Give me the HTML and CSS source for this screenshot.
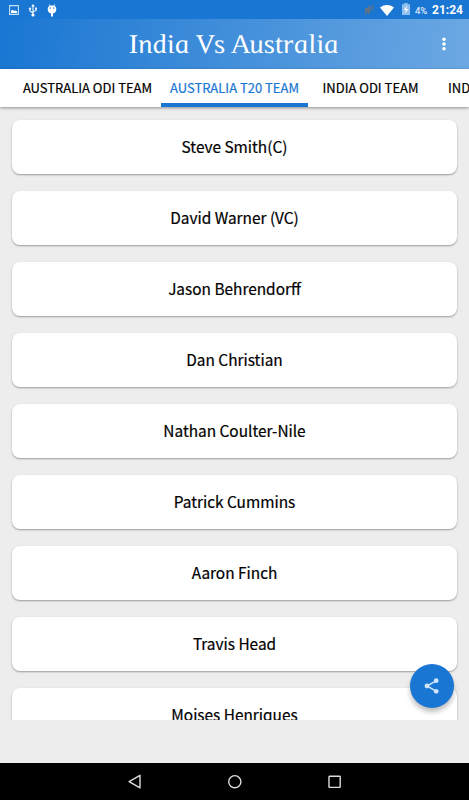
FILE: index.html
```html
<!DOCTYPE html>
<html lang="en">
<head>
<meta charset="utf-8">
<title>India Vs Australia</title>
<link rel="stylesheet" href="styles.css">
</head>
<body>
<div class="screen">
  <div class="status">
    <div class="status-left">
      <svg class="pic" width="10" height="10" viewBox="0 0 10 10"><path d="M.6.6h8.8v8.8H.6z" fill="none" stroke="#c5e0fb" stroke-width="1.1"/><path d="M2 8V5.8l1.7-1 1.500 1.300 1.200-.5L8 6.200V8z" fill="#fff"/></svg>
      <svg class="usb" width="10" height="13" viewBox="0 0 10 13"><path d="M5 2v9M5 9 2 7V4.500M5 8l3-1.500V4" fill="none" stroke="#e8f3ff" stroke-width="1.200"/><path d="m5 0 1.800 2.600H3.200z" fill="#fff"/><circle cx="5" cy="11" r="1.600" fill="#fff"/><circle cx="2" cy="4.600" r="1.200" fill="#e8f3ff"/><path d="M7 3.400h2v2H7z" fill="#e8f3ff"/></svg>
      <svg class="bug" width="10" height="13" viewBox="0 0 10 13"><path d="m2.300.5 1 1.500M7.700.5l-1 1.500" stroke="#fff"/><path d="M.7 5C.7 2.600 2.500 1.500 5 1.500S9.300 2.600 9.300 5c0 2.500-1.300 4.200-3.300 4.500V12.500H4V9.500C2 9.200.7 7.500.7 5z" fill="#fff"/><circle cx="3.300" cy="4" r=".7" fill="#1976d2"/><circle cx="6.700" cy="4" r=".7" fill="#1976d2"/></svg>
    </div>
    <div class="status-right">
      <svg class="mute" width="11" height="12" viewBox="0 0 11 12"><path d="M1 4h2l3-3v10L3 8H1z" fill="#607487"/><path d="m.8 10.500 9-9M7.500 4l2 .2M7.500 6.500l2 1" stroke="#607487" stroke-width="1.100"/></svg>
      <svg class="wifi" width="14" height="11" viewBox="0 0 14 11"><path d="M0 2.500Q7-2.300 14 2.500L7 11z" fill="#fff"/></svg>
      <svg class="batt" width="8" height="12" viewBox="0 0 8 12"><path d="M2.300 0h3.400v1.300H8V12H0V1.300h2.300z" fill="#8fbfee"/><path d="M4.900 2.500 1.800 7h2l-.6 3.400L6.300 6h-2z" fill="#fff"/></svg>
      <span class="pct">4%</span>
      <span class="clock">21:24</span>
    </div>
  </div>
  <header class="bar">
    <svg class="title" width="214" height="40" viewBox="0 0 214 40"><text x="2" y="24" textLength="210" lengthAdjust="spacingAndGlyphs" transform="translate(-4.500 0) skewX(10)">India Vs Australia</text></svg>
    <svg class="more" width="4" height="14" viewBox="0 0 4 14"><g fill="#fff"><circle cx="2" cy="2.300" r="1.800"/><circle cx="2" cy="7" r="1.800"/><circle cx="2" cy="11.700" r="1.800"/></g></svg>
  </header>
  <nav class="tabs">
    <div class="tab first">AUSTRALIA ODI TEAM</div>
    <div class="tab active">AUSTRALIA T20 TEAM</div>
    <div class="tab third">INDIA ODI TEAM</div>
    <div class="tab last">INDIA T20 TEAM</div>
  </nav>
  <main class="list">
    <div class="card">Steve Smith(C)</div>
    <div class="card">David Warner (VC)</div>
    <div class="card">Jason Behrendorff</div>
    <div class="card">Dan Christian</div>
    <div class="card">Nathan Coulter-Nile</div>
    <div class="card">Patrick Cummins</div>
    <div class="card">Aaron Finch</div>
    <div class="card">Travis Head</div>
    <div class="card">Moises Henriques</div>
  </main>
  <div class="gap"></div>
  <div class="nav">
    <svg width="14" height="16" viewBox="0 0 14 16"><path d="M12 1.300v12.600L1.100 7.600z" fill="none" stroke="#ddd" stroke-width="1.400" stroke-linejoin="round"/></svg>
    <svg width="14" height="16" viewBox="0 0 14 16"><circle cx="6.800" cy="7.700" r="6.100" fill="none" stroke="#ddd" stroke-width="1.400"/></svg>
    <svg width="14" height="16" viewBox="0 0 14 16"><rect x="1" y="2.200" width="11.200" height="11.200" rx=".6" fill="none" stroke="#ddd" stroke-width="1.400"/></svg>
  </div>
  <div class="fab"><svg width="16" height="18" viewBox="0 0 16 18"><path d="M12 3.800 3 9l9 5.200" fill="none" stroke="#cfe5fb" stroke-width="1.500"/><g fill="#cfe5fb"><circle cx="12.200" cy="3.700" r="2.400"/><circle cx="3" cy="9" r="2.400"/><circle cx="12.200" cy="14.300" r="2.400"/></g></svg></div>
</div>
</body>
</html>
```
FILE: styles.css
```css
* { box-sizing: border-box; }
body { margin: 0; }
.screen {
  position: relative;
  width: 469px;
  height: 800px;
  overflow: hidden;
  display: flex;
  flex-direction: column;
  background: #ededed;
  color: #000;
  font-family: "Noto Sans CJK JP", "Noto Sans", sans-serif;
}
.status {
  height: 19px;
  flex: none;
  display: flex;
  justify-content: space-between;
  background: #1976d2;
  color: #fff;
  font-family: Roboto, sans-serif;
}
.status-left, .status-right { display: flex; align-items: center; height: 20px; }
.pic { margin-left: 9px; }
.usb { margin-left: 9px; }
.bug { margin-left: 9px; }
.status-right { padding-right: 6px; }
.wifi { margin-left: 5px; }
.batt { margin-left: 8px; margin-bottom: 2px; }
.pct { margin-left: 5px; font-size: 9.500px; font-weight: 400; width: 13px; }
.clock { margin-left: 7px; font-size: 12px; font-weight: 700; width: 28px; display: flex; justify-content: flex-end; }
.bar {
  height: 50px;
  flex: none;
  display: flex;
  align-items: center;
  background: linear-gradient(100deg, #1976d2, #6ca8e3);
}
.title {
  margin-left: 128px;
  margin-top: 10px;
  overflow: visible;
  fill: #fff;
  font-family: "Liberation Serif", serif;
  font-style: italic;
  font-size: 27px;
}
.more { margin-left: 100px; }
.tabs {
  height: 38px;
  flex: none;
  display: flex;
  overflow: hidden;
  margin-bottom: -3px;
  background: #fff;
  box-shadow: 0 1px 3px rgba(0, 0, 0, .4);
  font-size: 13px;
  font-weight: 400;
  line-height: 37px;
  white-space: nowrap;
  -webkit-text-stroke: .2px;
}
.tab { flex: none; display: flex; justify-content: center; }
.first { width: 147px; margin-left: 14px; }
.active { width: 147px; color: #1976d2; border-bottom: 4px solid #1976d2; }
.third { width: 125px; }
.last { padding-left: 15px; }
.list {
  height: 616px;
  flex: none;
  overflow: hidden;
  padding: 16px 12px 0;
}
.card {
  height: 53.500px;
  margin-bottom: 17.500px;
  border-radius: 8px;
  background: #fff;
  box-shadow: 0 1px 2px rgba(0, 0, 0, .35);
  font-size: 15.400px;
  font-weight: 400;
  line-height: 53px;
  text-align: center;
  -webkit-text-stroke: .2px;
}
.gap { flex: 1; }
.nav {
  height: 37px;
  flex: none;
  display: flex;
  justify-content: center;
  align-items: center;
  gap: 86px;
  background: #000;
}
.fab {
  position: absolute;
  left: 409.500px;
  top: 664px;
  width: 44px;
  height: 44px;
  border-radius: 50%;
  display: flex;
  align-items: center;
  justify-content: center;
  background: #1976d2;
  box-shadow: 0 4px 5px rgba(0, 0, 0, .25);
}
```
